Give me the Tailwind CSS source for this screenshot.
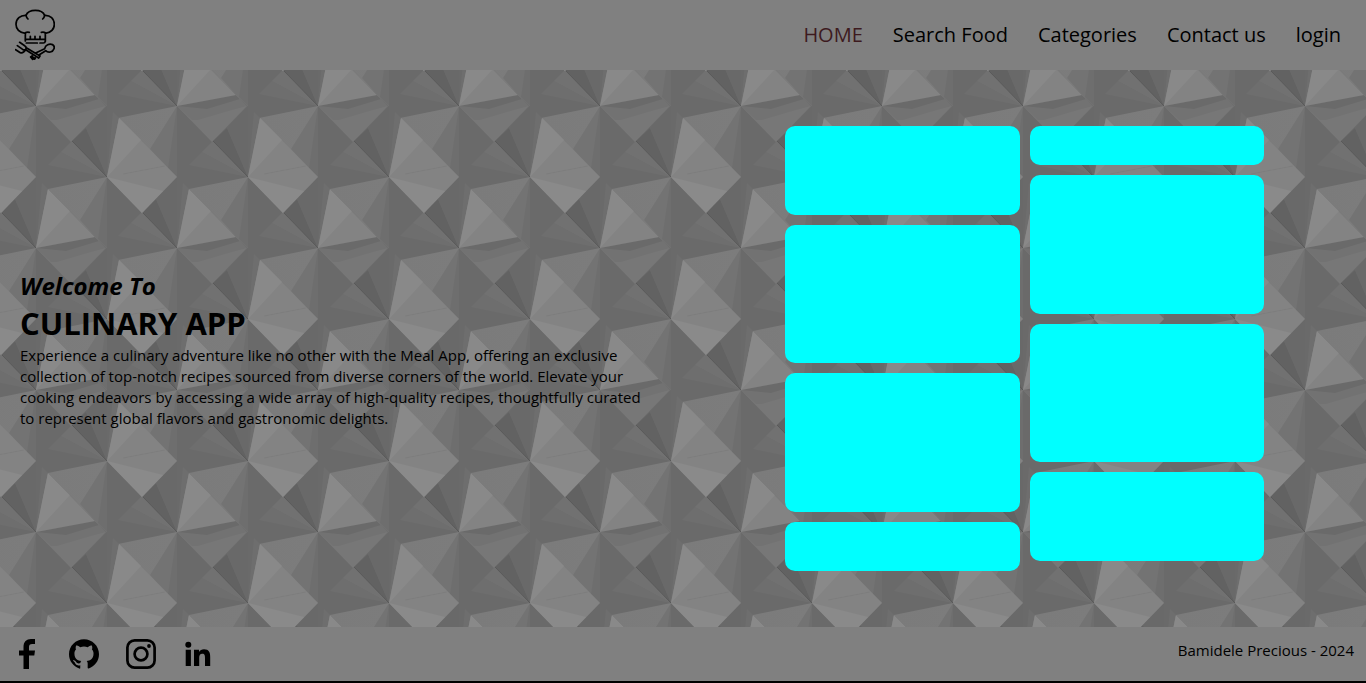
<!DOCTYPE html>
<html lang="en">
<head>
<meta charset="utf-8">
<meta name="viewport" content="width=device-width, initial-scale=1">
<title>Culinary App</title>
<script src="https://cdn.jsdelivr.net/npm/@tailwindcss/browser@4"></script>
</head>
<body class="min-h-screen flex flex-col bg-black text-black font-['Open_Sans',sans-serif]">

<header class="h-[70px] shrink-0 flex items-center justify-between bg-[#808080] pl-[15px] pr-[25px]">
  <a href="#" aria-label="Culinary App">
    <svg class="w-10 h-[52px]" viewBox="45 27 120 156" fill="none" stroke="#000" stroke-width="5.2" stroke-linecap="round" stroke-linejoin="round" aria-hidden="true">
      <path d="M76 123V100C58 99 48 87 48 73C48 57 61 45 78 46C82 36 92 31 106 31C120 31 130 36 134 46C151 45 163 57 163 73C163 87 153 99 136 100V123"/>
      <path d="M76 98Q80 96 88 97M136 98Q132 96 124 97M78 46Q79 52 84 57M134 46Q133 52 128 57"/>
      <path d="M77 118H135M91 109V117M105 109V117M120 109V117"/>
      <path d="M79 129H112M120 129H130Q135 129 136 124"/>
      <path d="M59 127L74 137Q81 141 77 149L116 174L120 168L80 144M52 137L69 149Q73 151 77 148M47 149L61 158Q69 162 77 149"/>
      <path d="M107 159L134 146C136 135 148 130 158 134C167 140 162 154 151 156C145 157 141 156 137 152L118 164M97 168L92 171L98 178L106 174"/>
      <path d="M95 170L104 176" stroke-width="7"/>
    </svg>
  </a>
  <nav class="flex gap-[30px] text-xl leading-7">
    <a href="#" class="text-[#3d1a1e]">HOME</a>
    <a href="#">Search Food</a>
    <a href="#">Categories</a>
    <a href="#">Contact us</a>
    <a href="#">login</a>
  </nav>
</header>

<main class="relative isolate flex-1 grid grid-cols-2 items-center overflow-hidden bg-[#6b6b6b]">
  <svg class="absolute inset-0 -z-10 w-full h-full" aria-hidden="true">
    <defs>
      <linearGradient id="shade" x1="0" y1="0" x2="1" y2="0"><stop offset="0" stop-color="#7b7b7b"/><stop offset="1" stop-color="#7c7c7c"/></linearGradient>
      <!-- facets shared by every vertex of the relief -->
      <g id="facets">
        <path d="M0 0L-59 12L-11 61L0 71Z" fill="url(#shade)"/>
        <path d="M0 0L-27 43L-11 61L0 71Z" fill="#737373"/>
        <path d="M0 0L-9 62L0 71Z" fill="#6e6e6e"/>
        <path d="M0 0L-35 -36L-21 -49Z" fill="#626262"/>
        <path d="M0 0L-21 -49L0 -71Z" fill="#696969"/>
        <path d="M0 0L-35 -36L-46 -25Z" fill="#717171"/>
        <path d="M0 0L-46 -25L-59 -12Z" fill="#6e6e6e"/>
        <path d="M0 0L12 -59L6 -65Z" fill="#6e6e6e"/>
        <path d="M0 0L-35 -36" stroke="#505050" stroke-width=".7"/>
      </g>
      <g id="ridge">
        <use href="#facets"/>
        <path d="M0 0L70 0L35 36Z" fill="#777"/>
        <path d="M0 0L59 -11L70 0L55 4L21 14L15 14Z" fill="#727272"/>
        <path d="M0 0L59 -11L63 -7L30 3Z" fill="#6a6a6a"/>
        <path d="M0 0L12 -59L59 -11Z" fill="#838383"/>
        <path d="M0 0L12 -59L34 -37Z" fill="#898989"/>
      </g>
      <g id="kite">
        <use href="#facets"/>
        <path d="M0 0L12 -59L70 0L35 36Z" fill="#838383"/>
        <path d="M0 0L12 -59L34 -37Z" fill="#898989"/>
        <path d="M0 0L56 14L35 36Z" fill="#8a8a8a"/>
        <path d="M16 -3L58 -11" stroke="#7a7a7a" stroke-width=".7"/>
      </g>
      <pattern id="relief" x="36" y="36" width="141" height="142" patternUnits="userSpaceOnUse">
        <rect width="141" height="142" fill="#6a6a6a"/>
        <use href="#ridge"/>
        <use href="#ridge" x="141"/>
        <use href="#ridge" y="142"/>
        <use href="#ridge" x="141" y="142"/>
        <use href="#kite" x="71" y="71"/>
      </pattern>
    </defs>
    <rect width="100%" height="100%" fill="url(#relief)"/>
  </svg>

  <section class="pl-5 pr-7 pt-[2px]">
    <h2 class="text-2xl leading-8 font-bold italic">Welcome To</h2>
    <h1 class="text-[31px] leading-[43px] font-bold">CULINARY APP</h1>
    <p class="text-[15px] leading-[21px]">Experience a culinary adventure like no other with the Meal App, offering an exclusive collection of top-notch recipes sourced from diverse corners of the world. Elevate your cooking endeavors by accessing a wide array of high-quality recipes, thoughtfully curated to represent global flavors and gastronomic delights.</p>
  </section>

  <section class="w-[70%] mx-auto grid grid-cols-2 gap-[10px]" aria-label="Meals">
    <div class="flex flex-col gap-[10px]">
      <div class="h-[89px] rounded-[10px] bg-[#00ffff]"></div>
      <div class="h-[138px] rounded-[10px] bg-[#00ffff]"></div>
      <div class="h-[139px] rounded-[10px] bg-[#00ffff]"></div>
      <div class="h-[49px] rounded-[10px] bg-[#00ffff]"></div>
    </div>
    <div class="flex flex-col gap-[10px]">
      <div class="h-[39px] rounded-[10px] bg-[#00ffff]"></div>
      <div class="h-[139px] rounded-[10px] bg-[#00ffff]"></div>
      <div class="h-[138px] rounded-[10px] bg-[#00ffff]"></div>
      <div class="h-[89px] rounded-[10px] bg-[#00ffff]"></div>
    </div>
  </section>
</main>

<footer class="h-[54px] shrink-0 mb-[2px] flex items-start justify-between bg-[#808080] pl-3 pr-3 pt-3">
  <div class="flex gap-[27px]">
    <a href="#" aria-label="Facebook"><svg class="size-[30px]" viewBox="0 0 30 30" aria-hidden="true"><path d="M11.500 30V16.500H7V11.500H11.500V8C11.500 2.700 14.500 0 19 0H23V5H20.200C17.900 5 17 6 17 8V11.500H23L22.300 16.500H17V30Z"/></svg></a>
    <a href="#" aria-label="GitHub"><svg class="size-[30px]" viewBox="0 0 24 24" aria-hidden="true"><path d="M12 .297c-6.630 0-12 5.373-12 12 0 5.303 3.438 9.800 8.205 11.385.6.113.82-.258.82-.577 0-.285-.01-1.040-.015-2.040-3.338.724-4.042-1.610-4.042-1.610C4.422 18.070 3.633 17.700 3.633 17.700c-1.087-.744.084-.729.084-.729 1.205.084 1.838 1.236 1.838 1.236 1.070 1.835 2.809 1.305 3.495.998.108-.776.417-1.305.76-1.605-2.665-.3-5.466-1.332-5.466-5.930 0-1.310.465-2.380 1.235-3.220-.135-.303-.54-1.523.105-3.176 0 0 1.005-.322 3.300 1.230.96-.267 1.980-.399 3-.405 1.020.006 2.040.138 3 .405 2.280-1.552 3.285-1.230 3.285-1.230.645 1.653.24 2.873.12 3.176.765.84 1.230 1.910 1.230 3.220 0 4.610-2.805 5.625-5.475 5.920.42.36.81 1.096.81 2.220 0 1.606-.015 2.896-.015 3.286 0 .315.21.69.825.57C20.565 22.092 24 17.592 24 12.297c0-6.627-5.373-12-12-12"/></svg></a>
    <a href="#" aria-label="Instagram"><svg class="size-[30px]" viewBox="0 0 30 30" fill="none" stroke="#000" stroke-width="2.700" aria-hidden="true"><rect x="1.400" y="1.400" width="27.200" height="27.200" rx="7.200"/><circle cx="15" cy="15" r="6.400"/><circle cx="23" cy="7" r="1.900" fill="#000" stroke="none"/></svg></a>
    <a href="#" aria-label="LinkedIn"><svg class="size-[30px]" viewBox="0 0 30 30" aria-hidden="true"><circle cx="5.300" cy="5.700" r="3"/><path d="M2.700 10.700H7.900V27H2.700ZM11 10.700H16V13C17 11.300 18.800 10.300 21 10.300C26 10.300 27.200 13.400 27.200 18V27H22V19C22 16.800 21.800 14.700 19.300 14.700C16.800 14.700 16.200 16.600 16.200 19V27H11Z"/></svg></a>
  </div>
  <p class="text-[15px] leading-[22px]">Bamidele Precious - 2024</p>
</footer>

</body>
</html>
